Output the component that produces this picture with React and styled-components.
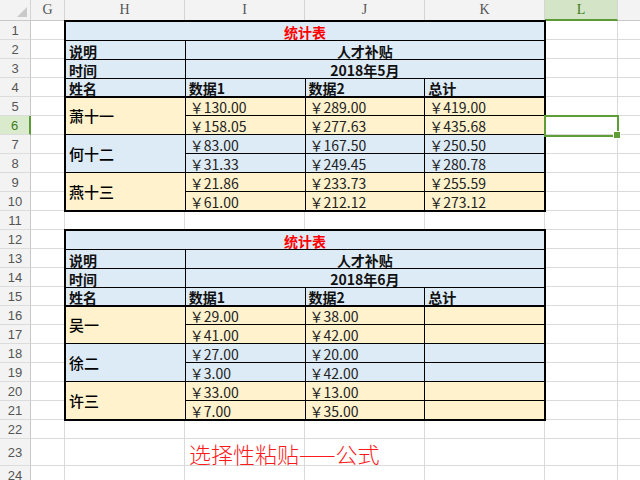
import React from 'react';
import styled, { createGlobalStyle } from 'styled-components';

const GlobalStyle = createGlobalStyle`
  html, body { margin: 0; padding: 0; background: #fff; }
  body { font-family: "Noto Sans CJK SC", sans-serif; overflow: hidden; }
`;

const COLS = [34, 120, 120, 120, 120, 73, 80];
const LETTERS = ['G', 'H', 'I', 'J', 'K', 'L', 'M'];
const ROW_COUNT = 24;
const rowHeight = (n) => (n === 23 ? 27 : 19);

const Sheet = styled.div`
  display: grid;
  grid-template-columns: 31px ${COLS.map((c) => c + 'px').join(' ')};
  grid-template-rows: 21px ${Array.from({ length: ROW_COUNT }, (_, i) => rowHeight(i + 1) + 'px').join(' ')};
  width: 640px;
  height: 480px;
  overflow: hidden;
`;

const Corner = styled.div`
  grid-row: 1;
  grid-column: 1;
  background: #f3f3f3;
  border-right: 1px solid #d4d4d4;
  border-bottom: 1px solid #c8c8c8;
  display: flex;
  align-items: flex-end;
  justify-content: flex-end;
  padding: 0 3px 3px 0;
  box-sizing: border-box;
`;

const ColHead = styled.div`
  grid-row: 1;
  grid-column: ${(p) => p.$col};
  background: ${(p) => (p.$active ? '#d3e5c6' : '#f3f3f3')};
  color: ${(p) => (p.$active ? '#3d7a1c' : '#555')};
  border-right: 1px solid #d4d4d4;
  border-bottom: ${(p) => (p.$active ? '2px solid #5b9b35' : '1px solid #c8c8c8')};
  font-family: "Liberation Serif", serif;
  font-size: 14px;
  display: flex;
  align-items: center;
  justify-content: center;
  box-sizing: border-box;
`;

const RowHead = styled.div`
  grid-row: ${(p) => p.$row};
  grid-column: 1;
  background: ${(p) => (p.$active ? '#d9eacd' : '#f3f3f3')};
  color: ${(p) => (p.$active ? '#3d7a1c' : '#555')};
  border-right: ${(p) => (p.$active ? '2px solid #5b9b35' : '1px solid #c8c8c8')};
  border-bottom: 1px solid #dcdcdc;
  font-family: "Liberation Sans", sans-serif;
  font-size: 13px;
  line-height: 15px;
  display: flex;
  align-items: center;
  justify-content: center;
  box-sizing: border-box;
`;

const Blank = styled.div`
  grid-row: ${(p) => p.$row};
  grid-column: ${(p) => p.$col};
  border-right: 1px solid #dadada;
  border-bottom: 1px solid #dadada;
  background: #fff;
`;

const Table = styled.div`
  grid-column: 3 / 7;
  grid-row: ${(p) => p.$start} / span 10;
  margin: -1px;
  border: 2px solid #000;
  background: #000;
  display: grid;
  grid-template-columns: repeat(4, 1fr);
  grid-template-rows: repeat(10, 1fr);
  gap: 1px;
  box-sizing: border-box;
  z-index: 1;
`;

const TCell = styled.div`
  grid-column: ${(p) => p.$col || 'auto'};
  grid-row: ${(p) => p.$row || 'auto'};
  background: ${(p) => (p.$fill === 'yellow' ? '#fff2cc' : '#ddebf7')};
  color: ${(p) => (p.$red ? '#ff0000' : '#111')};
  font-weight: ${(p) => (p.$bold ? 700 : 400)};
  font-size: 14px;
  line-height: 15px;
  display: flex;
  align-items: ${(p) => (p.$middle ? 'center' : 'flex-end')};
  justify-content: ${(p) => (p.$center ? 'center' : 'flex-start')};
  padding: 0 3px 0 3px;
  border-bottom: ${(p) => (p.$thick ? '1px solid #000' : 'none')};
  box-sizing: border-box;
  white-space: nowrap;
`;

const NameCell = styled(TCell)`
  font-size: 15px;
  font-weight: 500;
  color: #000;
`;

const Money = styled(TCell)`
  color: #222;
  padding-left: 4px;
`;

const Selection = styled.div`
  grid-row: 7;
  grid-column: 7;
  margin: -1px -1px -2px -1px;
  border: 2px solid #5f9e37;
  position: relative;
  z-index: 2;
`;

const Handle = styled.span`
  position: absolute;
  right: -4px;
  bottom: -4px;
  width: 6px;
  height: 6px;
  background: #5f9e37;
  border: 1px solid #fff;
`;

const Caption = styled.div`
  grid-row: 24;
  grid-column: 4 / 7;
  z-index: 1;
  color: #ff1a1a;
  font-size: 22px;
  line-height: 26px;
  font-weight: 300;
  display: flex;
  align-items: flex-end;
  padding: 0 0 0 4px;
  white-space: nowrap;
`;

const fmt = (v) => (v == null ? '' : '￥' + v.toFixed(2));

function StatTable({ start, month, groups }) {
  return (
    <Table $start={start}>
      <TCell $col="1 / 5" $center $bold $red>统计表</TCell>
      <TCell $bold>说明</TCell>
      <TCell $col="2 / 5" $center $bold>人才补贴</TCell>
      <TCell $bold>时间</TCell>
      <TCell $col="2 / 5" $center $bold>{month}</TCell>
      <TCell $bold $thick>姓名</TCell>
      <TCell $bold $thick>数据1</TCell>
      <TCell $bold $thick>数据2</TCell>
      <TCell $bold $thick>总计</TCell>
      {groups.map((g, gi) => {
        const fill = gi % 2 === 0 ? 'yellow' : 'blue';
        const r = 5 + gi * 2;
        return (
          <React.Fragment key={g.name}>
            <NameCell $row={`${r} / span 2`} $col="1" $fill={fill} $middle>{g.name}</NameCell>
            {g.rows.map((row, ri) =>
              row.map((v, ci) => (
                <Money key={`${ri}-${ci}`} $row={r + ri} $col={ci + 2} $fill={fill}>{fmt(v)}</Money>
              ))
            )}
          </React.Fragment>
        );
      })}
    </Table>
  );
}

const may = [
  { name: '萧十一', rows: [[130, 289, 419], [158.05, 277.63, 435.68]] },
  { name: '何十二', rows: [[83, 167.5, 250.5], [31.33, 249.45, 280.78]] },
  { name: '燕十三', rows: [[21.86, 233.73, 255.59], [61, 212.12, 273.12]] },
];

const june = [
  { name: '吴一', rows: [[29, 38, null], [41, 42, null]] },
  { name: '徐二', rows: [[27, 20, null], [3, 42, null]] },
  { name: '许三', rows: [[33, 13, null], [7, 35, null]] },
];

export default function App() {
  const rows = Array.from({ length: ROW_COUNT }, (_, i) => i + 1);
  return (
    <>
      <GlobalStyle />
      <Sheet>
        <Corner>
          <svg width="10" height="10" viewBox="0 0 10 10">
            <polygon points="10,0 10,10 0,10" fill="#c9c9c9" />
          </svg>
        </Corner>
        {LETTERS.map((l, i) => (
          <ColHead key={l} $col={i + 2} $active={l === 'L'}>{l === 'M' ? '' : l}</ColHead>
        ))}
        {rows.map((r) => (
          <React.Fragment key={r}>
            <RowHead $row={r + 1} $active={r === 6}>{r}</RowHead>
            {LETTERS.map((l, i) => (
              <Blank key={l} $row={r + 1} $col={i + 2} />
            ))}
          </React.Fragment>
        ))}
        <StatTable start={2} month="2018年5月" groups={may} />
        <StatTable start={13} month="2018年6月" groups={june} />
        <Selection><Handle /></Selection>
        <Caption>选择性粘贴——公式</Caption>
      </Sheet>
    </>
  );
}
